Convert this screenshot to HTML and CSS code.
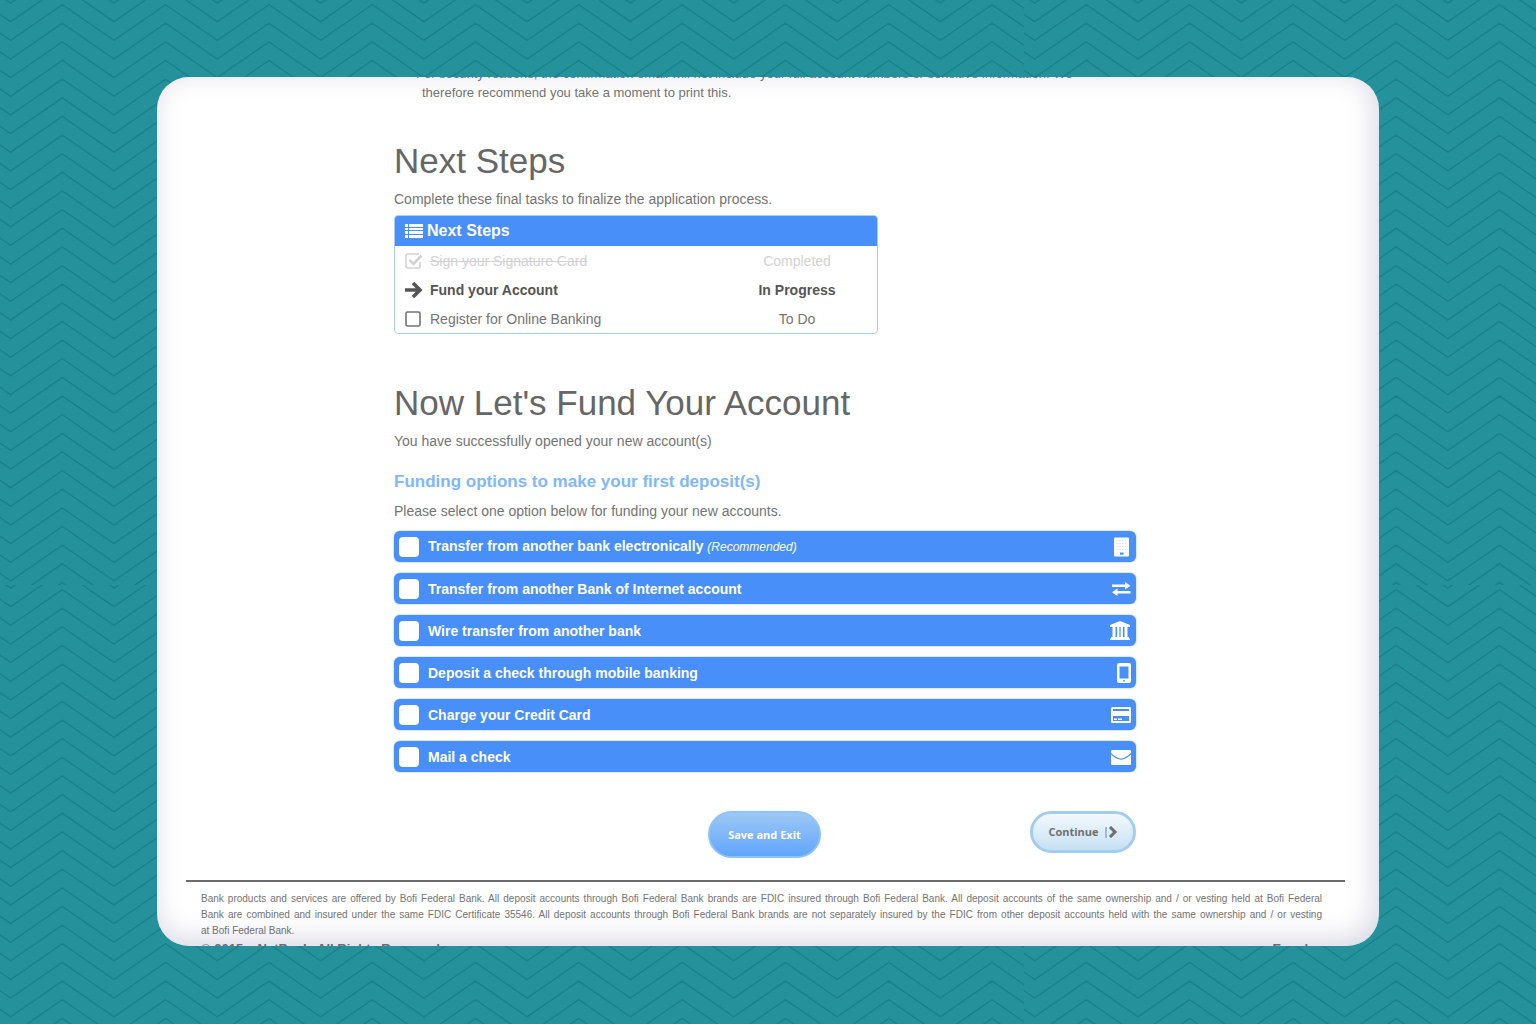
FILE: index.html
```html
<!DOCTYPE html>
<html lang="en">
<head>
<meta charset="utf-8">
<meta name="viewport" content="width=device-width, initial-scale=1">
<title>Next Steps</title>
<link rel="stylesheet" href="styles.css">
</head>
<body>
<div class="card">
  <main class="content">
    <p class="notice">For security reasons, the confirmation email will not include your full account numbers or sensitive information. We<br>therefore recommend you take a moment to print this.</p>

    <section class="section">
      <h1 class="title">Next Steps</h1>
      <p class="text">Complete these final tasks to finalize the application process.</p>
      <table class="steps">
        <thead>
          <tr><th colspan="2"><span class="cell"><svg class="icon" viewBox="0 0 18 16" aria-hidden="true"><path d="M0 1h3v3H0zM4 1h14v3H4zM0 5h3v2H0zM4 5h14v2H4zM0 8h3v3H0zM4 8h14v3H4zM0 12h3v3H0zM4 12h14v3H4z"/></svg>Next Steps</span></th></tr>
        </thead>
        <tbody>
          <tr class="done"><td><span class="cell"><svg class="icon" viewBox="0 0 18 16" aria-hidden="true"><path d="M15 9v4a2 2 0 0 1-2 2H3a2 2 0 0 1-2-2V3a2 2 0 0 1 2-2h11" fill="none" stroke="currentColor" stroke-width="1.6"/><path d="M4.500 7l4 4 8-8.500" fill="none" stroke="currentColor" stroke-width="2.600"/></svg><s>Sign your Signature Card</s></span></td><td class="status">Completed</td></tr>
          <tr class="current"><td><span class="cell"><svg class="icon" viewBox="0 0 18 16" aria-hidden="true"><path d="M0 8h14M8 1l7 7-7 7" fill="none" stroke="currentColor" stroke-width="3.600"/></svg>Fund your Account</span></td><td class="status">In Progress</td></tr>
          <tr><td><span class="cell"><svg class="icon" viewBox="0 0 18 16" aria-hidden="true"><rect x="1" y="1" width="14" height="14" rx="1.500" fill="none" stroke="currentColor" stroke-width="1.600"/></svg>Register for Online Banking</span></td><td class="status">To Do</td></tr>
        </tbody>
      </table>
    </section>

    <form class="section">
      <h2 class="title">Now Let's Fund Your Account</h2>
      <p class="text">You have successfully opened your new account(s)</p>
      <h3 class="subtitle">Funding options to make your first deposit(s)</h3>
      <p class="text">Please select one option below for funding your new accounts.</p>
      <div class="options">
        <label class="option"><input type="checkbox" class="box"><span>Transfer from another bank electronically <em>(Recommended)</em></span>
          <svg class="glyph inset" viewBox="0 0 20 20" aria-hidden="true"><path fill-rule="evenodd" d="M5 .5h13a1 1 0 0 1 1 1v17a1 1 0 0 1-1 1H5a1 1 0 0 1-1-1v-17a1 1 0 0 1 1-1zM10 15.500v2.300h3.500v-2.300z"/><path d="M6.500 3.500h10M6.500 6.500h10M6.500 9.500h10M6.500 12.500h10" fill="none" stroke="#cfe1fe" stroke-width="1" stroke-dasharray="1.500 1.300"/></svg></label>
        <label class="option"><input type="checkbox" class="box"><span>Transfer from another Bank of Internet account</span>
          <svg class="glyph" viewBox="0 0 20 20" aria-hidden="true"><path d="M1 5.500h13V3l5.500 3.700L14 10.400V8H1zM19.500 14.500H6.500V17L1 13.300l5.500-3.700V12h13z"/></svg></label>
        <label class="option"><input type="checkbox" class="box"><span>Wire transfer from another bank</span>
          <svg class="glyph inset" viewBox="0 0 20 20" aria-hidden="true"><path d="M10 0l10 4v2H0V4zM2.500 6h3v10h1.600V6h2.300v10h1.200V6h2.300v10h1.600V6h3v10H19v1.500h1V19H0v-1.500h1V16h1.500z"/></svg></label>
        <label class="option"><input type="checkbox" class="box"><span>Deposit a check through mobile banking</span>
          <svg class="glyph" viewBox="0 0 20 20" aria-hidden="true"><path fill-rule="evenodd" d="M8 0h10a2 2 0 0 1 2 2v16a2 2 0 0 1-2 2H8a2 2 0 0 1-2-2V2a2 2 0 0 1 2-2zM8.500 3.500v12h9v-12zM12 17.200h2v1.300h-2z"/></svg></label>
        <label class="option"><input type="checkbox" class="box"><span>Charge your Credit Card</span>
          <svg class="glyph" viewBox="0 0 20 20" aria-hidden="true"><path fill-rule="evenodd" d="M1.500 2h17A1.500 1.500 0 0 1 20 3.500v13a1.500 1.500 0 0 1-1.500 1.500h-17A1.500 1.500 0 0 1 0 16.500v-13A1.500 1.500 0 0 1 1.500 2zM2 4v2h16V4zM2 11v5h16v-5zM3 13.500h3V15H3zM7 13.500h4V15H7z"/></svg></label>
        <label class="option"><input type="checkbox" class="box"><span>Mail a check</span>
          <svg class="glyph" viewBox="0 0 20 20" aria-hidden="true"><path d="M1 3h18a1 1 0 0 1 1 1v2c-3 2.800-7 5.500-10 5.500S3 8.800 0 6V4a1 1 0 0 1 1-1zM0 7.500c3 2.800 7 5.300 10 5.300s7-2.500 10-5.300V17a1 1 0 0 1-1 1H1a1 1 0 0 1-1-1z"/></svg></label>
      </div>
      <div class="actions">
        <button type="button" class="button save">Save and Exit</button>
        <button type="submit" class="button continue">Continue <svg class="chevron" viewBox="0 0 14 12" aria-hidden="true"><path d="M2 1v11" stroke="#94bfe0" stroke-width="2"/><path d="M6 1l5 5-5 5" fill="none" stroke="currentColor" stroke-width="3"/></svg></button>
      </div>
    </form>
  </main>
  <footer class="footer">
    <p class="legal">
      <span class="line">Bank products and services are offered by Bofi Federal Bank. All deposit accounts through Bofi Federal Bank brands are FDIC insured through Bofi Federal Bank. All deposit accounts of the same ownership and / or vesting held at Bofi Federal</span>
      <span class="line">Bank are combined and insured under the same FDIC Certificate 35546. All deposit accounts through Bofi Federal Bank brands are not separately insured by the FDIC from other deposit accounts held with the same ownership and / or vesting</span>
      at Bofi Federal Bank.
    </p>
    <div class="copyright"><span>© 2015 – NetBank, All Rights Reserved</span><span>Equal</span></div>
  </footer>
</div>
</body>
</html>
```
FILE: styles.css
```css
* { box-sizing: border-box; }

body {
  display: flex;
  height: 100vh;
  margin: 0;
  padding: 77px 157px 78px;
  overflow: hidden;
  color: #747474;
  font: 14px/20px "Liberation Sans", Arial, sans-serif;
  background: #25919b url("data:image/svg+xml,%3Csvg xmlns='http://www.w3.org/2000/svg' width='1024' height='585'%3E%3Cdefs%3E%3Cpath id='a' fill='none' stroke='%2317818c' stroke-width='1.5' d='M-41-32.700l51.650 35.800 51.650-35.800 51.650 35.800 51.650-35.800 51.650 35.800 51.650-35.800 51.650 35.800 51.650-35.800 51.650 35.800 51.650-35.800 51.650 35.800 51.650-35.800 51.650 35.800 51.650-35.800 51.650 35.800 51.650-35.800 51.650 35.800 51.650-35.800 51.650 35.800 51.650-35.800 51.650 35.800'/%3E%3Cg id='b'%3E%3Cuse href='%23a'/%3E%3Cuse href='%23a' y='18.640'/%3E%3C/g%3E%3Cg id='c'%3E%3Cuse href='%23b'/%3E%3Cuse href='%23b' y='37.280'/%3E%3C/g%3E%3Cg id='d'%3E%3Cuse href='%23c'/%3E%3Cuse href='%23c' y='74.560'/%3E%3C/g%3E%3Cg id='e'%3E%3Cuse href='%23d'/%3E%3Cuse href='%23d' y='149.120'/%3E%3C/g%3E%3C/defs%3E%3Cuse href='%23e'/%3E%3Cuse href='%23e' y='298.240'/%3E%3Cuse href='%23b' y='596.480'/%3E%3C/svg%3E");
}

h1, h2, h3, p { margin: 0; }

.card {
  position: relative;
  flex: 1;
  overflow: hidden;
  background: #fff;
  border-radius: 32px;
}

/* Soft inner shadow above the content */
.card::after {
  content: "";
  position: absolute;
  inset: 0;
  border-radius: inherit;
  box-shadow: inset -4px -6px 28px rgba(50, 50, 110, .2);
  pointer-events: none;
}

.content {
  max-width: 979px;
  padding: 0 0 0 237px;
  margin-top: -13px;
}

.notice {
  padding-left: 28px;
  font-size: 13px;
  line-height: 19px;
  text-indent: -6px;
  white-space: nowrap;
}

.section { margin-top: 37px; }
.section + .section { margin-top: 47px; }

.title {
  margin-bottom: 6px;
  color: #666;
  font-size: 35px;
  font-weight: 400;
  line-height: 44px;
}

.subtitle {
  margin: 20px 0 8px;
  color: #80b8fb;
  font-size: 17px;
  line-height: 22px;
}

.steps {
  width: 484px;
  margin-top: 6px;
  border: 1px solid #a9cdfa;
  border-radius: 4px;
  border-spacing: 0;
  overflow: hidden;
}
.steps th {
  height: 30px;
  padding: 0 10px;
  color: #fff;
  font-size: 16px;
  text-align: left;
  background: #488ff9;
}
.steps td { height: 29px; padding: 0 10px; }
.cell { display: flex; align-items: center; gap: 7px; }
.steps th .cell { gap: 4px; }
.steps .status { width: 160px; padding: 0; text-align: center; }
.done { color: #d2d2d2; }
.current { color: #555; font-weight: 700; }

.icon { width: 18px; height: 16px; fill: currentColor; }

.options { display: grid; gap: 11px; margin-top: 10px; }
.option {
  display: flex;
  align-items: center;
  gap: 9px;
  height: 31px;
  padding: 0 5px;
  color: #fff;
  font-weight: 700;
  background: #488ff9;
  border-radius: 6px;
  box-shadow: 0 0 2px #78b0fb;
}
.option em { font-size: 12px; font-weight: 400; }
.box {
  appearance: none;
  width: 20px;
  height: 20px;
  margin: 0;
  background: #fff;
  border-radius: 4px;
}
.box:checked { box-shadow: inset 0 0 0 5px #fff, inset 0 0 0 10px #488ff9; }
.glyph { width: 20px; height: 20px; margin-left: auto; fill: #fff; }
.glyph.inset { margin-right: 1px; }

.actions {
  display: flex;
  justify-content: space-between;
  align-items: flex-start;
  margin: 39px 0 0 314px;
}
.button { font: 700 11px/16px "Open Sans", sans-serif; cursor: pointer; }
.save {
  width: 113px;
  height: 47px;
  padding: 0;
  color: #fff;
  background: linear-gradient(#9dc8f5, #60a5fe);
  border: 2px solid #8fc3f4;
  border-radius: 24px;
}
.continue {
  display: flex;
  justify-content: center;
  align-items: center;
  gap: 5px;
  width: 106px;
  height: 42px;
  padding: 0;
  color: #6f6f6f;
  background: linear-gradient(#f4f9fd, #c5e0f3);
  border: 3px solid #a3cdef;
  border-radius: 21px;
}
.chevron { width: 14px; height: 12px; }

.footer {
  margin: 22px 34px 0 29px;
  padding: 9px 23px 0 15px;
  border-top: 2px solid #6c6c6c;
}
.legal { font-size: 10px; line-height: 16px; }
.line { display: block; text-align-last: justify; }
.copyright {
  display: flex;
  justify-content: space-between;
  padding-right: 14px;
  font-size: 13px;
  font-weight: 700;
  line-height: 20px;
}
```
